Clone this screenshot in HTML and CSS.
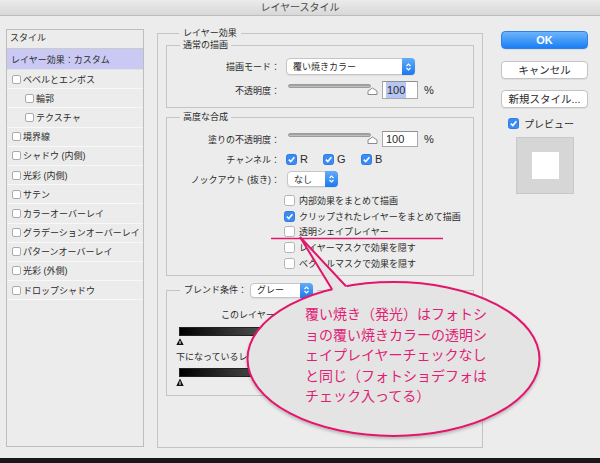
FILE: index.html
```html
<!DOCTYPE html>
<html lang="ja">
<head>
<meta charset="utf-8">
<title>レイヤースタイル</title>
<link rel="stylesheet" href="styles.css">
</head>
<body>
<div class="window">
  <header class="titlebar">レイヤースタイル</header>
  <div class="content">
    <ul class="style-list">
      <li class="list-head">スタイル</li>
      <li class="item selected">レイヤー効果：カスタム</li>
      <li class="item"><span class="cb"></span>ベベルとエンボス</li>
      <li class="item sub"><span class="cb"></span>輪郭</li>
      <li class="item sub"><span class="cb"></span>テクスチャ</li>
      <li class="item"><span class="cb"></span>境界線</li>
      <li class="item"><span class="cb"></span>シャドウ (内側)</li>
      <li class="item"><span class="cb"></span>光彩 (内側)</li>
      <li class="item"><span class="cb"></span>サテン</li>
      <li class="item"><span class="cb"></span>カラーオーバーレイ</li>
      <li class="item"><span class="cb"></span>グラデーションオーバーレイ</li>
      <li class="item"><span class="cb"></span>パターンオーバーレイ</li>
      <li class="item"><span class="cb"></span>光彩 (外側)</li>
      <li class="item"><span class="cb"></span>ドロップシャドウ</li>
    </ul>

    <fieldset class="group outer">
      <legend>レイヤー効果</legend>

      <fieldset class="group inner normal">
        <legend>通常の描画</legend>
        <div class="form form-normal">
          <span class="lbl">描画モード：</span>
          <div class="ctl">
            <div class="select select-mode"><span class="val">覆い焼きカラー</span><span class="stepper"><svg width="7" height="10" viewBox="0 0 7 10"><path d="M1.5 4 L3.5 2 L5.5 4 M1.5 6 L3.5 8 L5.5 6" fill="none" stroke="#fff" stroke-width="1.2"/></svg></span></div>
          </div>
          <span class="lbl">不透明度：</span>
          <div class="ctl">
            <div class="slider"><div class="track"></div><svg class="thumb" width="11" height="8" viewBox="0 0 11 8"><path d="M1 7.5 H10 V4 L5.5 1 L1 4 Z" fill="#fff" stroke="#8a8a8a" stroke-linejoin="round"/></svg></div>
            <div class="num num-tall"><span class="hl">100</span></div>
            <span class="pct">%</span>
          </div>
        </div>
      </fieldset>

      <fieldset class="group inner advanced">
        <legend>高度な合成</legend>
        <div class="form form-adv">
          <span class="lbl">塗りの不透明度：</span>
          <div class="ctl">
            <div class="slider"><div class="track"></div><svg class="thumb" width="11" height="8" viewBox="0 0 11 8"><path d="M1 7.5 H10 V4 L5.5 1 L1 4 Z" fill="#fff" stroke="#8a8a8a" stroke-linejoin="round"/></svg></div>
            <div class="num">100</div>
            <span class="pct">%</span>
          </div>
          <span class="lbl">チャンネル：</span>
          <div class="ctl channels">
            <span class="chan chan-r"><span class="chk on"><svg width="9" height="9" viewBox="0 0 9 9"><path d="M1.8 4.6 L3.8 6.6 L7.4 2.2" fill="none" stroke="#fff" stroke-width="1.6"/></svg></span>R</span>
            <span class="chan chan-g"><span class="chk on"><svg width="9" height="9" viewBox="0 0 9 9"><path d="M1.8 4.6 L3.8 6.6 L7.4 2.2" fill="none" stroke="#fff" stroke-width="1.6"/></svg></span>G</span>
            <span class="chan"><span class="chk on"><svg width="9" height="9" viewBox="0 0 9 9"><path d="M1.8 4.6 L3.8 6.6 L7.4 2.2" fill="none" stroke="#fff" stroke-width="1.6"/></svg></span>B</span>
          </div>
          <span class="lbl">ノックアウト (抜き)：</span>
          <div class="ctl">
            <div class="select select-ko"><span class="val">なし</span><span class="stepper"><svg width="7" height="10" viewBox="0 0 7 10"><path d="M1.5 4 L3.5 2 L5.5 4 M1.5 6 L3.5 8 L5.5 6" fill="none" stroke="#fff" stroke-width="1.2"/></svg></span></div>
          </div>
          <ul class="checklist">
            <li><span class="chk"></span>内部効果をまとめて描画</li>
            <li><span class="chk on"><svg width="9" height="9" viewBox="0 0 9 9"><path d="M1.8 4.6 L3.8 6.6 L7.4 2.2" fill="none" stroke="#fff" stroke-width="1.6"/></svg></span>クリップされたレイヤーをまとめて描画</li>
            <li><span class="chk"></span>透明シェイプレイヤー</li>
            <li><span class="chk"></span>レイヤーマスクで効果を隠す</li>
            <li><span class="chk"></span>ベクトルマスクで効果を隠す</li>
          </ul>
        </div>
      </fieldset>

      <fieldset class="group inner blend">
        <legend class="blend-legend"><span>ブレンド条件：</span><div class="select select-blend"><span class="val">グレー</span><span class="stepper"><svg width="7" height="10" viewBox="0 0 7 10"><path d="M1.5 4 L3.5 2 L5.5 4 M1.5 6 L3.5 8 L5.5 6" fill="none" stroke="#fff" stroke-width="1.2"/></svg></span></div></legend>
        <div class="blend-label this-layer">このレイヤー：</div>
        <div class="bar"></div>
        <svg class="marker" width="8" height="7" viewBox="0 0 8 7"><path d="M4 0.3 L7.7 7 H0.3 Z" fill="#111"/><path d="M4 3 V6" stroke="#fff" stroke-width="1"/></svg>
        <div class="blend-label under-layer">下になっているレイヤー：</div>
        <div class="bar bar-under"></div>
        <svg class="marker marker-under" width="8" height="8" viewBox="0 0 8 8"><path d="M4 0.5 L7.7 8 H0.3 Z" fill="#111"/><path d="M4 3.5 V7" stroke="#fff" stroke-width="1"/></svg>
      </fieldset>
    </fieldset>

    <div class="actions">
      <div class="btn primary">OK</div>
      <div class="btn cancel">キャンセル</div>
      <div class="btn newstyle">新規スタイル...</div>
      <div class="preview-row"><span class="chk on"><svg width="9" height="9" viewBox="0 0 9 9"><path d="M1.8 4.6 L3.8 6.6 L7.4 2.2" fill="none" stroke="#fff" stroke-width="1.6"/></svg></span>プレビュー</div>
      <div class="preview-box"><div class="preview-swatch"></div></div>
    </div>
  </div>
  <div class="dock"></div>

  <svg class="annot" width="600" height="463" viewBox="0 0 600 463">
    <defs>
      <filter id="soft" x="-10%" y="-10%" width="120%" height="130%">
        <feDropShadow dx="0" dy="2" stdDeviation="1.5" flood-color="#000" flood-opacity="0.22"/>
      </filter>
    </defs>
    <line x1="271" y1="238.5" x2="443" y2="238.5" stroke="#e2186c" stroke-width="1.5"/>
    <ellipse cx="393.5" cy="359" rx="146" ry="77" fill="#e4e4e4" stroke="#e2156b" stroke-width="2" filter="url(#soft)"/>
    <polygon points="300,237 336,295 352,292.4" fill="#e4e4e4"/>
    <polyline points="332,289.2 300,237 346,286.2" fill="none" stroke="#e2156b" stroke-width="2"/>
  </svg>
  <div class="callout-text">覆い焼き（発光）はフォトシ<br>ョの覆い焼きカラーの透明シ<br>ェイプレイヤーチェックなし<br>と同じ（フォトショデフォは<br>チェック入ってる）</div>
</div>
</body>
</html>
```

FILE: styles.css
```css
* { box-sizing: border-box; }
html, body { margin: 0; padding: 0; }
body {
  width: 600px;
  height: 463px;
  overflow: hidden;
  background: #ececec;
  font-family: "Liberation Sans", "Noto Sans CJK JP", sans-serif;
  font-size: 9px;
  color: #2a2a2a;
}
.window {
  position: relative;
  width: 600px;
  height: 463px;
  display: flex;
  flex-direction: column;
}
.titlebar {
  height: 16px;
  border-bottom: 1px solid #bdbdbd;
  background: linear-gradient(#ebebeb, #d8d8d8);
  text-align: center;
  font-size: 10px;
  line-height: 15px;
  color: #4a4a4a;
}
.content {
  flex: 1;
  display: flex;
  align-items: flex-start;
  padding: 11px 0 0 6px;
}
.dock { height: 5px; background: #181818; }

/* style list */
.style-list {
  list-style: none;
  margin: 2px 0 0;
  padding: 0;
  width: 138px;
  height: 418px;
  border: 1px solid #bdbdbd;
  background: #ececec;
}
.list-head {
  height: 19px;
  border-bottom: 1px solid #cbcbcb;
  padding-left: 3px;
  line-height: 17px;
}
.item {
  height: 19.2px;
  display: flex;
  align-items: center;
  gap: 2px;
  padding-left: 5px;
  border-bottom: 1px solid #f8f8f8;
  white-space: nowrap;
}
.item.selected {
  height: 21px;
  padding-left: 4px;
  background: #cac9f4;
  border-bottom-color: #e2e2e2;
}
.item.sub { padding-left: 18px; }
.cb {
  flex: none;
  width: 9px;
  height: 9px;
  border: 1px solid #ababab;
  border-radius: 2px;
  background: #fff;
}

/* group boxes */
fieldset {
  margin: 0;
  min-width: 0;
  border: 1px solid #c4c4c4;
}
legend {
  font-size: 9px;
  line-height: 12px;
  padding: 0 3px;
  margin-left: 13px;
}
.outer {
  width: 326px;
  height: 421px;
  margin-left: 13px;
  padding: 0 8px;
}
.outer > legend { padding: 0 4px; }
.normal { padding: 7px 0 8px; }
.advanced { margin-top: 3px; padding: 8px 0 4px; }
.blend { margin-top: 7px; padding: 11px 0 9px; }

.form {
  display: grid;
  grid-template-columns: 113px 1fr;
  column-gap: 6px;
  align-items: center;
}
.form-normal { grid-template-rows: 17px 18px; row-gap: 6px; }
.form-adv { grid-template-rows: 16px 14px 16px auto; row-gap: 5px; }
.lbl { text-align: right; white-space: nowrap; }
.ctl { display: flex; align-items: center; height: 100%; }

/* popup select */
.select {
  display: flex;
  align-items: stretch;
  height: 17px;
  border: 1px solid #c6c6c6;
  border-radius: 4px;
  background: #fff;
  box-shadow: 0 1px 1px rgba(0, 0, 0, 0.07);
}
.select .val {
  flex: 1;
  padding-left: 6px;
  display: flex;
  align-items: center;
  white-space: nowrap;
}
.stepper {
  width: 13px;
  margin: -1px -1px -1px 0;
  border-radius: 0 4px 4px 0;
  background: linear-gradient(#63acf9, #1c78ef);
  display: flex;
  align-items: center;
  justify-content: center;
}
.select-mode { width: 129px; }
.select-ko { width: 51px; height: 16px; margin-left: 1px; }
.select-blend { width: 63px; height: 15px; }

/* slider + number */
.slider {
  position: relative;
  width: 90px;
  height: 100%;
  margin-left: 2px;
}
.track {
  width: 83px;
  height: 4px;
  margin-top: 3px;
  border-radius: 2px;
  background: linear-gradient(#939393, #cdcdcd);
  border: 1px solid #9c9c9c;
}
.form-adv .track { margin-top: 2px; }
.thumb { position: absolute; left: 79px; top: 6px; }
.form-adv .thumb { top: 5px; }
.num {
  width: 36px;
  height: 16px;
  margin-left: 4px;
  padding-left: 3px;
  border: 1px solid #a9a9a9;
  border-top-color: #8f8f8f;
  background: #fff;
  font-size: 11px;
  line-height: 14px;
  display: flex;
  align-items: center;
}
.num-tall { height: 18px; }
.hl { background: #b6c5f3; padding: 1px 1px; }
.pct { margin-left: 6px; font-size: 11px; }

/* checkboxes */
.chk {
  flex: none;
  width: 11px;
  height: 11px;
  border: 1px solid #b4b4b4;
  border-radius: 2.5px;
  background: #fff;
  display: flex;
  align-items: center;
  justify-content: center;
}
.chk.on { background: #3a8bf4; border-color: #2d7ce6; }
.chan {
  display: flex;
  align-items: center;
  gap: 3px;
  font-size: 11px;
}
.chan-r { width: 37px; }
.chan-g { width: 38px; }
.checklist {
  grid-column: 2;
  list-style: none;
  margin: 1px 0 0 -2px;
  padding: 0;
}
.checklist li {
  height: 15.6px;
  display: flex;
  align-items: center;
  gap: 4px;
  white-space: nowrap;
}

/* blend if */
.blend-legend {
  display: flex;
  align-items: center;
  gap: 3px;
  line-height: 15px;
  padding: 0 4px;
}
.blend-label { line-height: 13px; white-space: nowrap; }
.this-layer { margin-left: 54px; }
.under-layer { margin: 6px 0 0 9px; }
.bar {
  width: 268px;
  height: 9px;
  margin: 5px 0 0 12px;
  border: 1px solid #222;
  background: linear-gradient(90deg, #000, #fff);
}
.bar-under { margin-top: 4px; }
.marker { display: block; margin: 2px 0 0 9px; }
.marker-under { margin-top: 1px; }

/* action buttons */
.actions {
  width: 87px;
  margin: 4px 0 0 18px;
  display: flex;
  flex-direction: column;
}
.btn {
  height: 18px;
  border: 1px solid #c3c3c3;
  border-radius: 4px;
  background: #fff;
  font-size: 10.5px;
  line-height: 16px;
  text-align: center;
  color: #2a2a2a;
  box-shadow: 0 1px 0 rgba(0, 0, 0, 0.06);
  white-space: nowrap;
}
.btn.primary {
  background: linear-gradient(#6db4fb, #1b7ff4);
  border-color: #2a82ef;
  color: #fff;
  font-size: 11px;
  font-weight: bold;
}
.cancel { margin-top: 12px; }
.newstyle { margin-top: 11px; }
.preview-row {
  display: flex;
  align-items: center;
  gap: 5px;
  height: 13px;
  margin: 9px 0 0 7px;
  font-size: 10px;
}
.preview-box {
  width: 58px;
  height: 57px;
  margin: 7px 0 0 15px;
  border: 1px solid #c8c8c8;
  background: #d6d6d6;
  display: flex;
  align-items: center;
  justify-content: center;
}
.preview-swatch { width: 27px; height: 27px; background: #fff; }

/* annotation overlay */
.annot { position: absolute; left: 0; top: 0; pointer-events: none; }
.callout-text {
  position: absolute;
  left: 305px;
  top: 303px;
  font-family: "Noto Sans CJK JP", sans-serif;
  font-size: 14px;
  line-height: 20.5px;
  color: #e11d74;
  white-space: nowrap;
}
```
